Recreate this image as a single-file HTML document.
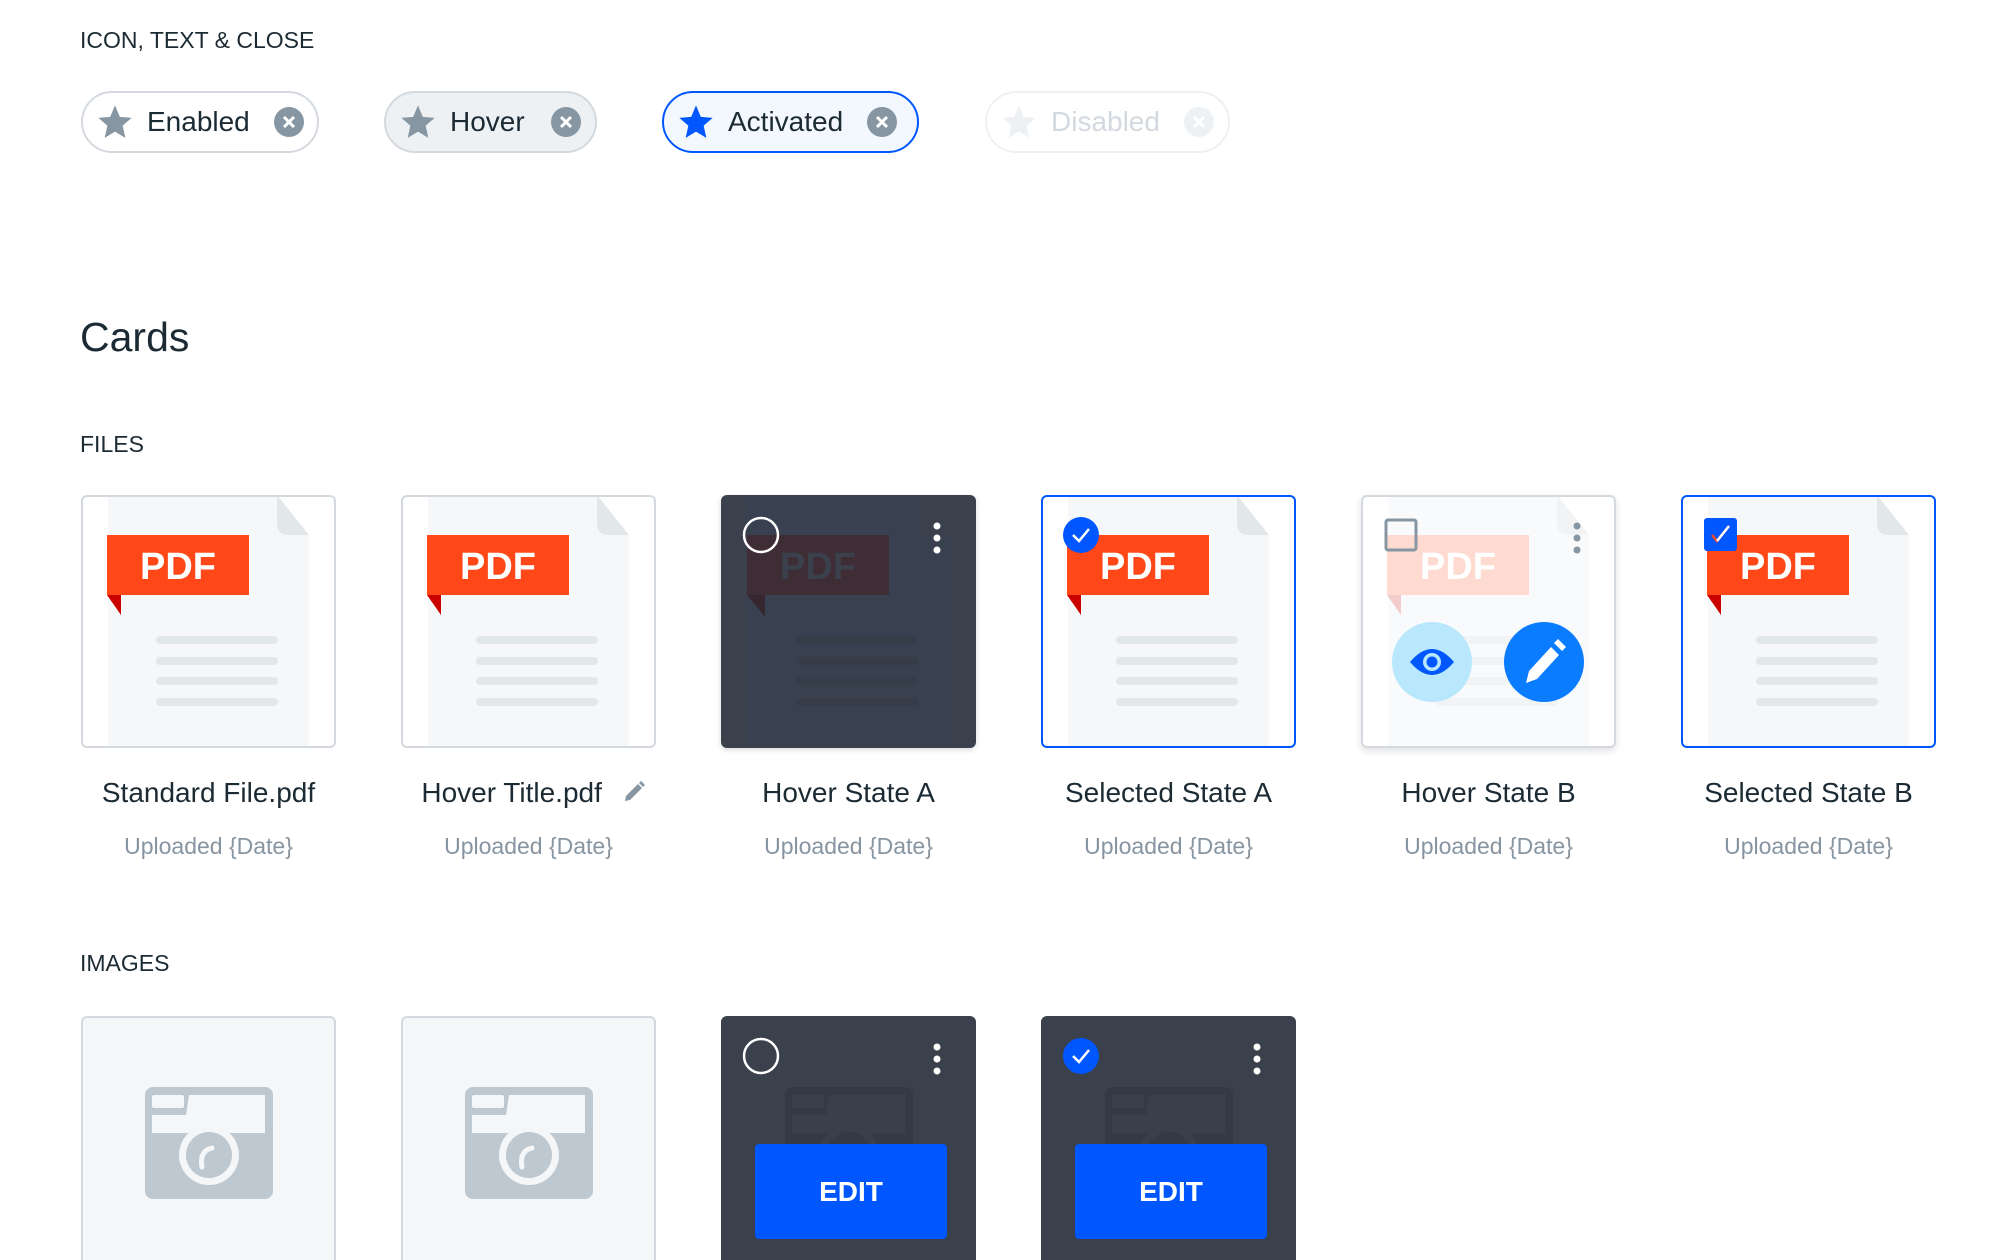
<!DOCTYPE html>
<html style="overflow:hidden;height:1260px"><head><meta charset="utf-8"><style>
*{box-sizing:border-box;margin:0;padding:0}
body{width:2016px;height:1260px;overflow:hidden;background:#fff;font-family:"Liberation Sans",sans-serif;color:#1b2a33;position:relative}
.abs{position:absolute}
.lbl{font-size:23px;color:#1b2a33}
.chip{position:absolute;top:91px;height:62px;border-radius:31px;border:2px solid #d3d9de;display:flex;align-items:center;font-size:28px;color:#1b2a33}
.chip svg{flex:none}
.card{position:absolute;width:255px;height:253px;border:2px solid #d3d9de;border-radius:6px;overflow:hidden;background:#fff}
.card svg{position:absolute;left:-2px;top:-2px}
.t{position:absolute;width:255px;text-align:center;font-size:28px;color:#1b2a33}
.s{position:absolute;width:255px;text-align:center;font-size:23px;color:#8695a1}
.img{position:absolute;top:1016px;width:255px;height:260px;border:2px solid #d3d9de;border-radius:6px;background:#f5f6f8;overflow:hidden}
.dark{background:#3a404c;border-color:#3a404c}
.edit{position:absolute;left:32px;top:126px;width:192px;height:95px;background:#0057ff;border-radius:4px;color:#fff;font-weight:bold;font-size:28px;display:flex;align-items:center;justify-content:center}
</style></head><body>

<div class="abs lbl" style="left:80px;top:27px">ICON, TEXT &amp; CLOSE</div>

<div class="chip" style="left:81px;width:238px;background:#fff">
<svg style="margin-left:12px" width="40" height="40" viewBox="0 0 24 24"><path d="M12 2l2.9 6.9 7.1.6-5.4 4.7 1.6 7.3L12 17.8 5.8 21.5l1.6-7.3L2 9.5l7.1-.6z" fill="#8696a2"/></svg>
<span style="margin-left:12px">Enabled</span>
<svg style="margin-left:24px" width="30" height="30" viewBox="0 0 24 24"><circle cx="12" cy="12" r="12" fill="#8696a2"/><path d="M8 8l8 8M16 8l-8 8" stroke="#fff" stroke-width="2.4"/></svg></div>

<div class="chip" style="left:384px;width:213px;background:#eef1f4">
<svg style="margin-left:12px" width="40" height="40" viewBox="0 0 24 24"><path d="M12 2l2.9 6.9 7.1.6-5.4 4.7 1.6 7.3L12 17.8 5.8 21.5l1.6-7.3L2 9.5l7.1-.6z" fill="#8696a2"/></svg>
<span style="margin-left:12px">Hover</span>
<svg style="margin-left:26px" width="30" height="30" viewBox="0 0 24 24"><circle cx="12" cy="12" r="12" fill="#8696a2"/><path d="M8 8l8 8M16 8l-8 8" stroke="#fff" stroke-width="2.4"/></svg></div>

<div class="chip" style="left:662px;width:257px;background:#f3f7fe;border-color:#0057ff">
<svg style="margin-left:12px" width="40" height="40" viewBox="0 0 24 24"><path d="M12 2l2.9 6.9 7.1.6-5.4 4.7 1.6 7.3L12 17.8 5.8 21.5l1.6-7.3L2 9.5l7.1-.6z" fill="#0057ff"/></svg>
<span style="margin-left:12px">Activated</span>
<svg style="margin-left:24px" width="30" height="30" viewBox="0 0 24 24"><circle cx="12" cy="12" r="12" fill="#8696a2"/><path d="M8 8l8 8M16 8l-8 8" stroke="#fff" stroke-width="2.4"/></svg></div>

<div class="chip" style="left:985px;width:245px;background:#fff;border-color:#eef1f4;color:#d3d9de">
<svg style="margin-left:12px" width="40" height="40" viewBox="0 0 24 24"><path d="M12 2l2.9 6.9 7.1.6-5.4 4.7 1.6 7.3L12 17.8 5.8 21.5l1.6-7.3L2 9.5l7.1-.6z" fill="#eef1f4"/></svg>
<span style="margin-left:12px">Disabled</span>
<svg style="margin-left:24px" width="30" height="30" viewBox="0 0 24 24"><circle cx="12" cy="12" r="12" fill="#eef1f4"/><path d="M8 8l8 8M16 8l-8 8" stroke="#fff" stroke-width="2.4"/></svg></div>

<div class="abs" style="left:80px;top:314px;font-size:41px;color:#1b2a33">Cards</div>
<div class="abs lbl" style="left:80px;top:431px">FILES</div>

<div class="card" style="left:81px;top:495px"><svg width="255" height="253"><path d="M27 0H196L228 40V253H27Z" fill="#f5f7f9"/><path d="M196 0V28q0 12 12 12H228Z" fill="#e2e7ea"/><rect x="26" y="40" width="142" height="60" fill="#ff4717"/><path d="M26 100H40V120Z" fill="#c00"/><text x="97" y="84" font-family="Liberation Sans" font-weight="bold" font-size="38" fill="#fff" text-anchor="middle">PDF</text><g fill="#e2e7ea"><rect x="75" y="141" width="122" height="8" rx="4"/><rect x="75" y="162" width="122" height="8" rx="4"/><rect x="75" y="182" width="122" height="8" rx="4"/><rect x="75" y="203" width="122" height="8" rx="4"/></g></svg></div>
<div class="t" style="left:81px;top:777px">Standard File.pdf</div>
<div class="s" style="left:81px;top:833px">Uploaded {Date}</div>

<div class="card" style="left:401px;top:495px"><svg width="255" height="253"><path d="M27 0H196L228 40V253H27Z" fill="#f5f7f9"/><path d="M196 0V28q0 12 12 12H228Z" fill="#e2e7ea"/><rect x="26" y="40" width="142" height="60" fill="#ff4717"/><path d="M26 100H40V120Z" fill="#c00"/><text x="97" y="84" font-family="Liberation Sans" font-weight="bold" font-size="38" fill="#fff" text-anchor="middle">PDF</text><g fill="#e2e7ea"><rect x="75" y="141" width="122" height="8" rx="4"/><rect x="75" y="162" width="122" height="8" rx="4"/><rect x="75" y="182" width="122" height="8" rx="4"/><rect x="75" y="203" width="122" height="8" rx="4"/></g></svg></div>
<div class="t" style="left:401px;top:777px;padding-left:10px">Hover Title.pdf <svg width="24" height="24" viewBox="0 0 24 24" style="vertical-align:-2px;margin-left:12px"><path d="M3 21l1-5L16 4l4 4L8 20zM17 3l2-2 4 4-2 2z" fill="#8696a2"/></svg></div>
<div class="s" style="left:401px;top:833px">Uploaded {Date}</div>

<div class="card dark" style="left:721px;top:495px;box-shadow:0 2px 6px rgba(0,0,0,.15)"><svg width="255" height="253"><path d="M27 0H196L228 40V253H27Z" fill="#394050"/><path d="M196 0V28q0 12 12 12H228Z" fill="#3a404c"/><rect x="26" y="40" width="142" height="60" fill="#3e2d35"/><path d="M26 100H44V122Z" fill="#35262f"/><text x="97" y="84" font-family="Liberation Sans" font-weight="bold" font-size="38" fill="#3a404c" text-anchor="middle">PDF</text><g fill="#363c48"><rect x="75" y="141" width="122" height="8" rx="4"/><rect x="75" y="162" width="122" height="8" rx="4"/><rect x="75" y="182" width="122" height="8" rx="4"/><rect x="75" y="203" width="122" height="8" rx="4"/></g><circle cx="40" cy="40" r="17" fill="none" stroke="#fff" stroke-width="2.5"/><g fill="#fff"><circle cx="216" cy="31" r="3.5"/><circle cx="216" cy="43" r="3.5"/><circle cx="216" cy="55" r="3.5"/></g></svg></div>
<div class="t" style="left:721px;top:777px">Hover State A</div>
<div class="s" style="left:721px;top:833px">Uploaded {Date}</div>

<div class="card" style="left:1041px;top:495px;border-color:#0057ff"><svg width="255" height="253"><path d="M27 0H196L228 40V253H27Z" fill="#f5f7f9"/><path d="M196 0V28q0 12 12 12H228Z" fill="#e2e7ea"/><rect x="26" y="40" width="142" height="60" fill="#ff4717"/><path d="M26 100H40V120Z" fill="#c00"/><text x="97" y="84" font-family="Liberation Sans" font-weight="bold" font-size="38" fill="#fff" text-anchor="middle">PDF</text><g fill="#e2e7ea"><rect x="75" y="141" width="122" height="8" rx="4"/><rect x="75" y="162" width="122" height="8" rx="4"/><rect x="75" y="182" width="122" height="8" rx="4"/><rect x="75" y="203" width="122" height="8" rx="4"/></g><circle cx="40" cy="40" r="18" fill="#0057ff"/><path d="M32 40l6 6 10-12" fill="none" stroke="#fff" stroke-width="2.5"/></svg></div>
<div class="t" style="left:1041px;top:777px">Selected State A</div>
<div class="s" style="left:1041px;top:833px">Uploaded {Date}</div>

<div class="card" style="left:1361px;top:495px;box-shadow:0 3px 8px rgba(0,0,0,.12)"><svg width="255" height="253"><path d="M27 0H196L228 40V253H27Z" fill="#f9fafb"/><path d="M196 0V28q0 12 12 12H228Z" fill="#f1f3f5"/><rect x="26" y="40" width="142" height="60" fill="#ffdad0"/><path d="M26 100H40V120Z" fill="#f2cccc"/><text x="97" y="84" font-family="Liberation Sans" font-weight="bold" font-size="38" fill="#fff" text-anchor="middle">PDF</text><g fill="#f1f3f5"><rect x="75" y="141" width="122" height="8" rx="4"/><rect x="75" y="162" width="122" height="8" rx="4"/><rect x="75" y="182" width="122" height="8" rx="4"/><rect x="75" y="203" width="122" height="8" rx="4"/></g><rect x="25" y="25" width="30" height="30" rx="2" fill="none" stroke="#8696a2" stroke-width="3"/><g fill="#8696a2"><circle cx="216" cy="31" r="3.5"/><circle cx="216" cy="43" r="3.5"/><circle cx="216" cy="55" r="3.5"/></g><circle cx="71" cy="167" r="40" fill="#b9e8fd"/><path d="M49 167q22-26 44 0q-22 26-44 0z" fill="#0057ff"/><circle cx="71" cy="167" r="9" fill="#b9e8fd"/><circle cx="71" cy="167" r="5.5" fill="#0057ff"/><circle cx="183" cy="167" r="40" fill="#0a7cff"/><path d="M165 188l3-12 22-24 8 8-22 24zM193 148l4-4 8 8-4 4z" fill="#fff"/></svg></div>
<div class="t" style="left:1361px;top:777px">Hover State B</div>
<div class="s" style="left:1361px;top:833px">Uploaded {Date}</div>

<div class="card" style="left:1681px;top:495px;border-color:#0057ff"><svg width="255" height="253"><path d="M27 0H196L228 40V253H27Z" fill="#f5f7f9"/><path d="M196 0V28q0 12 12 12H228Z" fill="#e2e7ea"/><rect x="26" y="40" width="142" height="60" fill="#ff4717"/><path d="M26 100H40V120Z" fill="#c00"/><text x="97" y="84" font-family="Liberation Sans" font-weight="bold" font-size="38" fill="#fff" text-anchor="middle">PDF</text><g fill="#e2e7ea"><rect x="75" y="141" width="122" height="8" rx="4"/><rect x="75" y="162" width="122" height="8" rx="4"/><rect x="75" y="182" width="122" height="8" rx="4"/><rect x="75" y="203" width="122" height="8" rx="4"/></g><rect x="23" y="23" width="33" height="33" rx="3" fill="#0057ff"/><path d="M31 40l5 6 12-15" fill="none" stroke="#ff4717" stroke-width="2.5"/><path d="M36 46l12-15" fill="none" stroke="#fff" stroke-width="2.5"/></svg></div>
<div class="t" style="left:1681px;top:777px">Selected State B</div>
<div class="s" style="left:1681px;top:833px">Uploaded {Date}</div>

<div class="abs lbl" style="left:80px;top:950px">IMAGES</div>

<div class="img" style="left:81px"><svg class="abs" style="left:62px;top:69px" width="128" height="112" viewBox="0 0 128 112"><rect width="128" height="112" rx="8" fill="#bdc8d0"/><rect x="7" y="8" width="32" height="13" rx="2" fill="#f5f6f8"/><path d="M44 8H120V46H7V28H41Z" fill="#f5f6f8"/><circle cx="64" cy="68" r="30" fill="#f5f6f8"/><circle cx="64" cy="68" r="23" fill="#bdc8d0"/><path d="M57 80q-3-16 10-19" stroke="#f5f6f8" stroke-width="5" fill="none" stroke-linecap="round"/></svg></div>
<div class="img" style="left:401px"><svg class="abs" style="left:62px;top:69px" width="128" height="112" viewBox="0 0 128 112"><rect width="128" height="112" rx="8" fill="#bdc8d0"/><rect x="7" y="8" width="32" height="13" rx="2" fill="#f5f6f8"/><path d="M44 8H120V46H7V28H41Z" fill="#f5f6f8"/><circle cx="64" cy="68" r="30" fill="#f5f6f8"/><circle cx="64" cy="68" r="23" fill="#bdc8d0"/><path d="M57 80q-3-16 10-19" stroke="#f5f6f8" stroke-width="5" fill="none" stroke-linecap="round"/></svg></div>
<div class="img dark" style="left:721px"><svg class="abs" style="left:62px;top:69px" width="128" height="112" viewBox="0 0 128 112"><rect width="128" height="112" rx="8" fill="#343945"/><rect x="7" y="8" width="32" height="13" rx="2" fill="#393f4b"/><path d="M44 8H120V46H7V28H41Z" fill="#393f4b"/><circle cx="64" cy="68" r="30" fill="#393f4b"/><circle cx="64" cy="68" r="23" fill="#343945"/></svg><svg class="abs" style="left:0;top:0" width="255" height="80"><circle cx="38" cy="38" r="17" fill="none" stroke="#fff" stroke-width="2.5"/><g fill="#fff"><circle cx="214" cy="29" r="3.5"/><circle cx="214" cy="41" r="3.5"/><circle cx="214" cy="53" r="3.5"/></g></svg><div class="edit">EDIT</div></div>
<div class="img dark" style="left:1041px"><svg class="abs" style="left:62px;top:69px" width="128" height="112" viewBox="0 0 128 112"><rect width="128" height="112" rx="8" fill="#343945"/><rect x="7" y="8" width="32" height="13" rx="2" fill="#393f4b"/><path d="M44 8H120V46H7V28H41Z" fill="#393f4b"/><circle cx="64" cy="68" r="30" fill="#393f4b"/><circle cx="64" cy="68" r="23" fill="#343945"/></svg><svg class="abs" style="left:0;top:0" width="255" height="80"><circle cx="38" cy="38" r="18" fill="#0057ff"/><path d="M30 38l6 6 10-12" fill="none" stroke="#fff" stroke-width="2.5"/><g fill="#fff"><circle cx="214" cy="29" r="3.5"/><circle cx="214" cy="41" r="3.5"/><circle cx="214" cy="53" r="3.5"/></g></svg><div class="edit">EDIT</div></div>

</body></html>
